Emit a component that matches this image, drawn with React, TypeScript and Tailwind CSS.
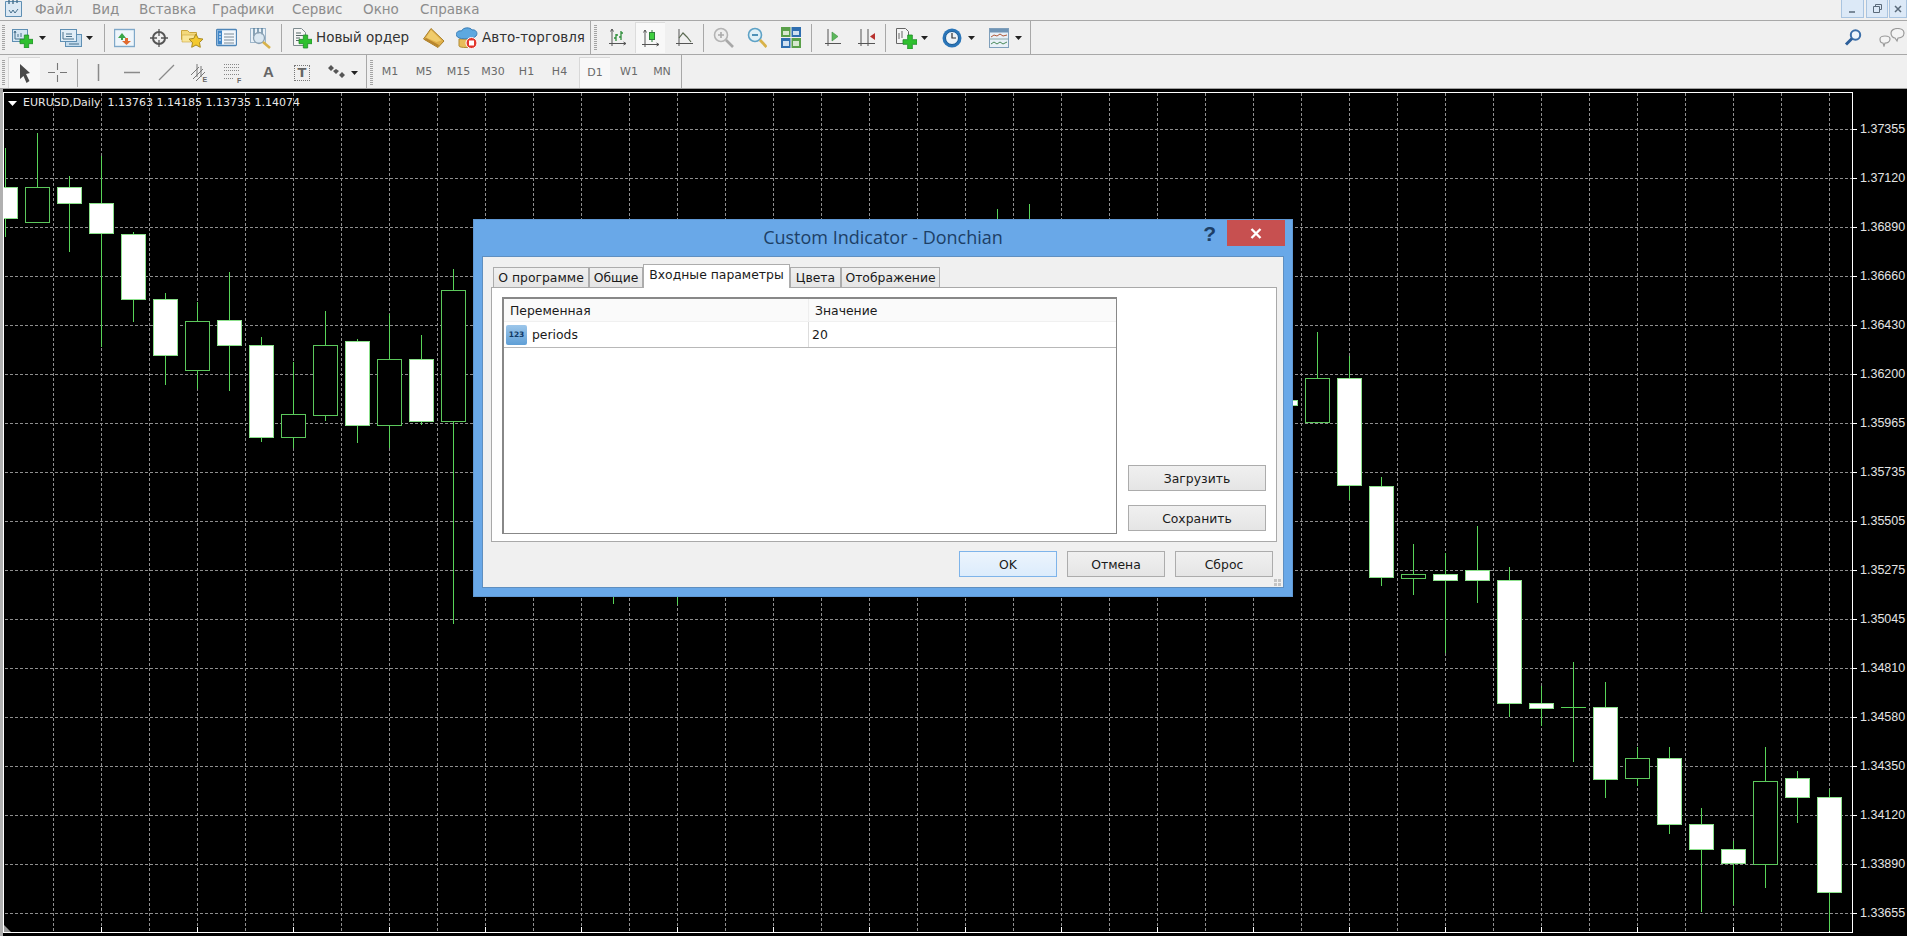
import React from "react";

const S = ({ w, h, className = "", children }: { w: number; h: number; className?: string; children: React.ReactNode }) => (
  <svg width={w} height={h} viewBox={`0 0 ${w} ${h}`} className={`shrink-0 ${className}`}>{children}</svg>
);

const Plus = ({ x, y, s = 11 }: { x: number; y: number; s?: number }) => {
  const t = s / 3;
  return (
    <path
      d={`M${x + t} ${y}h${t}v${t}h${t}v${t}h${-t}v${t}h${-t}v${-t}h${-t}v${-t}h${t}z`}
      fill="#2fc02f"
      stroke="#1f8a2a"
      strokeWidth="0.8"
    />
  );
};

const Drop = ({ ml }: { ml: string }) => (
  <svg width={7} height={4} viewBox="0 0 7 4" className={`shrink-0 ${ml}`}><path d="M0 0h7L3.5 4z" fill="#222" /></svg>
);
const Sep = ({ ml }: { ml: string }) => <div className={`w-px h-[28px] bg-[#a8a8a8] shrink-0 ${ml}`} />;
const Grip = ({ ml }: { ml: string }) => (
  <div className={`w-[3px] h-[26px] shrink-0 bg-[repeating-linear-gradient(to_bottom,#a4a4a4_0,#a4a4a4_1px,transparent_1px,transparent_2px)] ${ml}`} />
);

const NewChart = () => (
  <S w={21} h={20} className="ml-[7px]">
    <rect x="0.5" y="1.5" width="15" height="12" fill="#d5e6f3" stroke="#5f8fb3" />
    <path d="M3 3v8h9M3 3l-1 2M3 3l1 2" stroke="#47708c" fill="none" />
    <path d="M6 9V6M9 9V5" stroke="#47708c" />
    <Plus x={8} y={7} s={13} />
  </S>
);
const Profiles = () => (
  <S w={23} h={20} className="ml-[14px]">
    <rect x="5.5" y="6.5" width="16" height="12" fill="#c4dcee" stroke="#5f8fb3" />
    <rect x="0.5" y="1.5" width="16" height="12" fill="#e0edf7" stroke="#5f8fb3" />
    <path d="M3 4v7h11M6 6h6M6 8.5h6" stroke="#47708c" fill="none" />
    <path d="M9 16h10" stroke="#47708c" />
  </S>
);
const Market = () => (
  <S w={21} h={20} className="ml-[9px]">
    <rect x="0.5" y="1.5" width="20" height="17" fill="#eef5fb" stroke="#7fa8c9" strokeWidth="1.4" />
    <path d="M7 10l-3-0 4-5 4 5h-3v2H7z" fill="#3aa64a" />
    <path d="M11 10h3v3h3l-4.500 4-4.500-4h3z" fill="#e06a30" />
  </S>
);
const Crosshair = () => (
  <S w={18} h={18} className="ml-[15px]">
    <circle cx="9" cy="9" r="6" fill="none" stroke="#555" strokeWidth="2" />
    <path d="M9 0v7M9 11v7M0 9h7M11 9h7" stroke="#555" strokeWidth="1.3" />
  </S>
);
const FolderStar = () => (
  <S w={23} h={21} className="ml-[13px]">
    <path d="M0.500 3.500h6l2 2h7v7H0.500z" fill="#f3d87a" stroke="#c9a53e" />
    <path d="M1 8h13l-1 7H1z" fill="#f9e69a" stroke="#c9a53e" strokeWidth=".6" />
    <path d="M15 7l2.200 4.400 4.800.7-3.500 3.400.8 4.800-4.300-2.300-4.300 2.300.8-4.800-3.500-3.400 4.800-.7z" fill="#f4c92e" stroke="#a98a1e" />
  </S>
);
const TerminalIcon = () => (
  <S w={21} h={19} className="ml-[12px]">
    <rect x="0.500" y="1.500" width="20" height="16" rx="1" fill="#f2f7fc" stroke="#4f86b8" strokeWidth="1.300" />
    <rect x="1.500" y="2.500" width="4.500" height="14" fill="#3f86c8" />
    <path d="M8 6h10M8 9h10M8 12h10M8 15h10" stroke="#7a8a96" />
    <path d="M3 6h2M3 9h2M3 12h2" stroke="#fff" />
  </S>
);
const Tester = () => (
  <S w={22} h={22} className="ml-[13px]">
    <rect x="0.500" y="1.500" width="15" height="14" fill="#eaf2f9" stroke="#9db6cb" />
    <path d="M4 1v8M8 1v6M12 1v7" stroke="#47708c" strokeWidth="1.200" />
    <circle cx="9" cy="11" r="5.500" fill="#d4e4f0" fillOpacity=".7" stroke="#8aa0b2" strokeWidth="1.300" />
    <path d="M13 15l7 6" stroke="#d8b24a" strokeWidth="2.600" />
  </S>
);
const NewOrder = () => (
  <S w={20} h={22} className="ml-[10px]">
    <path d="M1.500 1.500h8l4 4v13h-12z" fill="#f6f6f6" stroke="#7f8b8f" />
    <path d="M4 6h5M4 8.500h7M4 11h4M4 13.500h3" stroke="#566" />
    <Plus x={7} y={8} s={13} />
  </S>
);
const Gold = () => (
  <S w={22} h={20} className="ml-[12px]">
    <path d="M8 0.500L21 13l-6 6.500L0.500 11z" fill="#e0b04a" stroke="#a87f2a" />
    <path d="M8 2L18.500 12.500 13.500 14 3 9.500z" fill="#f0cc6c" />
    <path d="M1 11.500L15 19l1-2-13-7z" fill="#b8862e" />
  </S>
);
const Auto = () => (
  <S w={22} h={22} className="ml-[11px]">
    <path d="M3 13v6c0 2 14 2 14 0v-7H3z" fill="#e8bd5a" stroke="#b08b34" />
    <path d="M1.500 10c-3-3 0-7 4-6 1.500-4 9-4 10.500-1 3.500-1 6.500 3 4 6-2 3-15.500 4-18.500 1z" fill="#5da8e0" stroke="#3a7db5" />
    <circle cx="15.500" cy="16" r="5.500" fill="#e2372c" stroke="#fff" strokeWidth="1" />
    <rect x="13" y="13.500" width="5" height="5" fill="#fff" />
  </S>
);
const Axes = () => (
  <path d="M4 1v17M1 15.500h17M4 1l-1.500 2.500M4 1l1.500 2.500M18 15.500l-2.500-1.500M18 15.500l-2.500 1.500" stroke="#555" fill="none" strokeWidth="1" />
);
const BarChart = () => (
  <S w={19} h={19} className="ml-[11px]"><Axes />
    <path d="M8 13V6M8 10H6M8 7h2M13 12V3M13 9h-2M13 5h2" stroke="#2f8f3a" strokeWidth="1.300" fill="none" />
  </S>
);
const CandleIcon = () => (
  <S w={19} h={19}><Axes />
    <path d="M11 1v12" stroke="#2f7f3a" />
    <rect x="8.500" y="3.500" width="5" height="7" fill="#3fcf3f" stroke="#2f7f3a" />
  </S>
);
const LineIcon = () => (
  <S w={17} h={19} className="ml-[11px]">
    <path d="M3 1v17M0 15.500h17" stroke="#555" />
    <path d="M3 10l4-5 4 4 4 5" stroke="#5b6a52" fill="none" strokeWidth="1.200" />
  </S>
);
const ZoomIn = () => (
  <S w={21} h={21} className="ml-[9px]">
    <circle cx="8" cy="8" r="6.500" fill="#eee" stroke="#b4b4b4" strokeWidth="1.600" />
    <path d="M5 8h6M8 5v6" stroke="#aaa" strokeWidth="1.600" />
    <path d="M13 13l7 7" stroke="#a8a8a8" strokeWidth="2.600" />
  </S>
);
const ZoomOut = () => (
  <S w={20} h={21} className="ml-[13px]">
    <circle cx="8" cy="8" r="6.500" fill="#e0f0f6" stroke="#5ea2c6" strokeWidth="1.600" />
    <path d="M5 8h6" stroke="#3f86b0" strokeWidth="1.800" />
    <path d="M13 13l6.500 7" stroke="#d8b24a" strokeWidth="2.800" />
  </S>
);
const Tile = () => (
  <S w={20} h={21} className="ml-[14px]">
    <rect x="0" y="0" width="9.500" height="10" fill="#5aa04a" />
    <rect x="10.500" y="0" width="9.500" height="10" fill="#2f6eb0" />
    <rect x="0" y="11" width="9.500" height="10" fill="#2f6eb0" />
    <rect x="10.500" y="11" width="9.500" height="10" fill="#5aa04a" />
    <rect x="2" y="4" width="6" height="4" fill="#d8e8d0" />
    <rect x="12" y="4" width="6" height="4" fill="#d0e0f0" />
    <rect x="2" y="14" width="6" height="5" fill="#d0e0f0" />
    <rect x="12" y="14" width="6" height="5" fill="#d8e8d0" />
  </S>
);
const Scroll = () => (
  <S w={17} h={19} className="ml-[12px]">
    <path d="M4 1v17M1 15.500h16" stroke="#555" />
    <path d="M8 4l6 4.500-6 4.500z" fill="#5cb85c" stroke="#3f8f3f" strokeWidth=".6" />
  </S>
);
const Shift = () => (
  <S w={17} h={19} className="ml-[17px]">
    <path d="M3 1v17M10 1v17M0 15.500h17" stroke="#555" />
    <path d="M17 5l-5 3.500 5 3.500z" fill="#b8322f" />
  </S>
);
const TemplateIcon = () => (
  <S w={21} h={23} className="ml-[10px]">
    <path d="M0.500 2.500h9l3 3v12h-12z" fill="#f4f4f4" stroke="#666" />
    <path d="M3 7v6M6 5v7" stroke="#666" />
    <Plus x={7} y={9} s={14} />
  </S>
);
const Clock = () => (
  <S w={20} h={20} className="ml-[14px]">
    <circle cx="10" cy="10" r="9.500" fill="#2a75b8" />
    <circle cx="10" cy="10" r="6.500" fill="#eef3f7" stroke="#175a96" />
    <path d="M10 5v5h4" stroke="#333" strokeWidth="1.200" fill="none" />
  </S>
);
const Indicators = () => (
  <S w={20} h={20} className="ml-[14px]">
    <rect x="0.500" y="0.500" width="19" height="19" fill="#e8f0f7" stroke="#7f9fbb" />
    <rect x="1" y="1" width="18" height="3.500" fill="#6f94b5" />
    <path d="M2 9l3-2 3 1 3-2 3 2 4-1" stroke="#b05a3a" fill="none" />
    <path d="M1 11h18" stroke="#8aa" />
    <path d="M2 16l3-2 3 2 3-2 3 2 4-2" stroke="#4a8a5a" fill="none" />
  </S>
);
const Search = () => (
  <S w={18} h={17} className="shrink-0">
    <circle cx="11.500" cy="6" r="4.700" fill="#eef5fb" stroke="#3b6ea8" strokeWidth="2" />
    <path d="M8 9.500l-6 6" stroke="#2d5f9a" strokeWidth="3" />
  </S>
);
const Chat = () => (
  <S w={26} h={19} className="ml-[17px] mr-[2px]">
    <path d="M12 5c0-6 13-6 13 0 0 4-4 5-6 5l-1 3-2-3c-2 0-4-2-4-5z" fill="#f4f4f4" stroke="#999" strokeWidth="1.200" />
    <path d="M1 11c0-4 10-4 10 0 0 3-3 4-5 4l-1 3-1-3c-2 0-3-1-3-4z" fill="#f4f4f4" stroke="#999" strokeWidth="1.200" />
  </S>
);

const Arrow = () => (
  <S w={12} h={19}><path d="M1 0l10 9-4 1 3.500 7-3 2-3-7-3.500 3z" fill="#4a4a4a" /></S>
);
const ThinCross = () => (
  <S w={19} h={19} className="ml-[8px]"><path d="M9.500 0v7M9.500 12v7M0 9.500h7M12 9.500h7" stroke="#777" strokeWidth="1.100" /></S>
);
const VLine = () => <S w={3} h={17} className="ml-[19px]"><path d="M1.500 0v17" stroke="#8a8a8a" strokeWidth="1.500" /></S>;
const HLine = () => <S w={16} h={3} className="ml-[24px]"><path d="M0 1.500h16" stroke="#8a8a8a" strokeWidth="1.500" /></S>;
const Trend = () => <S w={17} h={17} className="ml-[18px]"><path d="M1 16L16 1" stroke="#8a8a8a" strokeWidth="1.300" /></S>;
const Channel = () => (
  <S w={19} h={20} className="ml-[15px]">
    <path d="M1 12L9 4M3 16L13 6M6 18L15 9M7 1v13M11 3v11" stroke="#777" strokeWidth="1" />
    <text x="12.500" y="19" fontSize="7" fontWeight="700" fill="#666" fontFamily="'Liberation Sans',sans-serif">E</text>
  </S>
);
const Fibo = () => (
  <S w={19} h={20} className="ml-[15px]">
    <path d="M0 1.500h15M0 4.500h15M0 7.500h15M0 11.500h15M0 15.500h10" stroke="#888" strokeDasharray="1 1" />
    <text x="13" y="20" fontSize="7" fontWeight="700" fill="#666" fontFamily="'Liberation Sans',sans-serif">F</text>
  </S>
);
const TBox = () => (
  <div className="ml-[21px] w-[16px] h-[16px] border border-dotted border-[#777] flex items-center justify-center text-[13px] leading-none font-bold text-[#666] shrink-0">T</div>
);
const Arrows = () => (
  <S w={19} h={15} className="ml-[18px]">
    <path d="M0 3l3-3 3 3-3 3zM5 6l3-2 3 2-3 3zM11 10l3-3 3 3-3 3z" fill="#555" />
  </S>
);

type C = [number, number, number, number, number, 0 | 1];
const candles: C[] = [
  [5, 148, 237, 187, 218, 1],
  [37, 133, 222, 187, 222, 0],
  [69, 176, 252, 187, 203, 1],
  [101, 156, 347, 203, 233, 1],
  [133, 232, 322, 234, 299, 1],
  [165, 293, 385, 299, 355, 1],
  [197, 302, 389, 321, 370, 0],
  [229, 272, 391, 320, 345, 1],
  [261, 337, 442, 345, 437, 1],
  [293, 362, 448, 414, 437, 0],
  [325, 311, 421, 345, 415, 0],
  [357, 339, 443, 341, 425, 1],
  [389, 314, 448, 359, 425, 0],
  [421, 335, 425, 359, 421, 1],
  [453, 269, 624, 290, 421, 0],
  [613, 400, 604, 420, 500, 1],
  [677, 400, 605, 420, 500, 0],
  [997, 209, 400, 250, 350, 0],
  [1029, 204, 400, 250, 350, 1],
  [1285, 380, 420, 400, 405, 1],
  [1317, 332, 422, 378, 422, 0],
  [1349, 356, 500, 378, 485, 1],
  [1381, 477, 586, 486, 577, 1],
  [1413, 544, 595, 574, 578, 0],
  [1445, 553, 653, 574, 580, 1],
  [1477, 526, 603, 570, 580, 1],
  [1509, 567, 717, 580, 703, 1],
  [1541, 686, 726, 703, 708, 1],
  [1573, 662, 762, 707, 707, 0],
  [1605, 682, 798, 707, 779, 1],
  [1637, 747, 786, 758, 778, 0],
  [1669, 747, 834, 758, 824, 1],
  [1701, 808, 912, 824, 849, 1],
  [1733, 841, 905, 849, 863, 1],
  [1765, 747, 888, 781, 864, 0],
  [1797, 771, 823, 778, 797, 1],
  [1829, 789, 931, 797, 892, 1],
];

const vGrid = Array.from({ length: 38 }, (_, i) => 53 + 48 * i);
const hGrid = Array.from({ length: 17 }, (_, i) => 129 + 49 * i);
const bottomTicks = Array.from({ length: 19 }, (_, i) => 101 + 96 * i);
const prices = ["1.37355", "1.37120", "1.36890", "1.36660", "1.36430", "1.36200", "1.35965", "1.35735", "1.35505", "1.35275", "1.35045", "1.34810", "1.34580", "1.34350", "1.34120", "1.33890", "1.33655"];

const Chart = () => (
  <svg width={1848} height={839} viewBox="4 93 1848 839" shapeRendering="crispEdges" className="block">
    {hGrid.map((y) => <line key={y} x1={5} x2={1852} y1={y + 0.5} y2={y + 0.5} stroke="#8e8e8e" strokeDasharray="3 2" />)}
    {vGrid.map((x) => <line key={x} x1={x + 0.5} x2={x + 0.5} y1={93} y2={932} stroke="#8e8e8e" strokeDasharray="3 2" />)}
    {bottomTicks.map((x) => <line key={x} x1={x + 0.5} x2={x + 0.5} y1={927} y2={932} stroke="#fff" />)}
    <path d="M4 925l7 7H4z" fill="#9a9a9a" shapeRendering="auto" />
    {candles.map(([x, hi, lo, top, bot, fill]) => (
      <g key={x}>
        <line x1={x + 0.5} x2={x + 0.5} y1={hi} y2={lo} stroke="#58d458" />
        {top === bot ? (
          <line x1={x - 12} x2={x + 13} y1={top + 0.5} y2={top + 0.5} stroke="#58d458" />
        ) : (
          <rect x={x - 11.5} y={top + 0.5} width={24} height={bot - top} fill={fill ? "#ffffff" : "#000000"} stroke={fill ? "#8be08b" : "#5cc85c"} />
        )}
      </g>
    ))}
  </svg>
);

const Tab = ({ w, label }: { w: string; label: string }) => (
  <div className={`${w} h-[20px] pt-[2px] border border-b-0 border-[#acacac] bg-gradient-to-b from-[#f0f0f0] to-[#e5e5e5] flex items-center justify-center shrink-0 text-[#1a1a1a]`}>{label}</div>
);

const Btn = ({ w, label, primary }: { w: string; label: string; primary?: boolean }) => (
  <div
    className={`${w} h-[26px] pt-[2px] border flex items-center justify-center text-[#1a1a1a] shrink-0 bg-gradient-to-b ${
      primary ? "border-[#7eb4ea] from-[#ecf4fc] to-[#dcecfc]" : "border-[#acacac] from-[#f0f0f0] to-[#e5e5e5]"
    }`}
  >
    {label}
  </div>
);

const Dialog = () => (
  <div className="absolute left-[473px] top-[219px] w-[820px] h-[378px] bg-[#69a8e8] border border-[#5f98d4] flex flex-col font-['DejaVu_Sans',sans-serif] text-[12.4px]">
    <div className="h-[36px] shrink-0 grid grid-cols-[1fr_auto_1fr] items-start">
      <div />
      <div className="h-[34px] flex items-center font-['Open_Sans',sans-serif] text-[18px] text-[#1d3f66]">Custom Indicator - Donchian</div>
      <div className="flex justify-end mr-[7px]">
        <div className="mr-[11px] h-[26px] flex items-center text-[#1d3f66] font-bold text-[21px] font-['Liberation_Sans',sans-serif] leading-none">?</div>
        <div className="w-[58px] h-[26px] bg-[#c75050] flex items-center justify-center">
          <svg width="12" height="11" viewBox="0 0 12 11"><path d="M1.500 1l9 9M10.500 1l-9 9" stroke="#fff" strokeWidth="2.400" /></svg>
        </div>
      </div>
    </div>
    <div className="relative mx-[8px] h-[332px] border border-[#5f8fc0] bg-[#f0f0f0] flex flex-col px-[8px] pt-[7px]">
      <div className="h-[23px] flex items-end pl-[2px] shrink-0 relative">
        <Tab w="w-[96px]" label="О программе" />
        <Tab w="w-[54px]" label="Общие" />
        <div className="relative z-10 -mb-px w-[147px] h-[24px] border border-b-0 border-[#acacac] bg-white flex items-center justify-center shrink-0 pb-[2px] text-[#1a1a1a]">Входные параметры</div>
        <Tab w="w-[51px]" label="Цвета" />
        <Tab w="w-[99px]" label="Отображение" />
      </div>
      <div className="h-[255px] w-[786px] border border-[#a9a9a9] bg-white flex pl-[10px] pt-[9px] shrink-0 text-[#1a1a1a]">
        <div className="w-[615px] h-[237px] border-t-2 border-l-2 border-r border-b border-[#888888] flex flex-col shrink-0">
          <div className="h-[23px] bg-[#fafafa] border-b border-[#f0f0f0] flex items-center shrink-0">
            <div className="w-[305px] h-full border-r border-[#eeeeee] flex items-center pl-[6px] pt-[2px] shrink-0">Переменная</div>
            <div className="pl-[6px] pt-[2px]">Значение</div>
          </div>
          <div className="h-[26px] border-b border-[#b8b8b8] flex items-center shrink-0">
            <div className="w-[305px] h-full border-r border-[#dddddd] flex items-center pl-[2px] shrink-0">
              <div className="relative w-[21px] h-[20px] shrink-0 rounded-[2px] bg-gradient-to-b from-[#9cc6ea] to-[#5f9fd6] flex items-center justify-center text-[7.500px] font-bold text-[#123a66] leading-none">123</div>
              <span className="ml-[5px] pt-[2px]">periods</span>
            </div>
            <div className="pl-[3px] pt-[2px]">20</div>
          </div>
        </div>
        <div className="ml-[11px] pt-[168px] flex flex-col gap-[14px]">
          <Btn w="w-[138px]" label="Загрузить" />
          <Btn w="w-[138px]" label="Сохранить" />
        </div>
      </div>
      <div className="mt-[9px] flex justify-end gap-[10px] pr-[2px]">
        <Btn w="w-[98px]" label="OK" primary />
        <Btn w="w-[98px]" label="Отмена" />
        <Btn w="w-[98px]" label="Сброс" />
      </div>
      <svg width="7" height="7" viewBox="0 0 7 7" className="absolute right-[2px] bottom-[1px]">
        <path d="M0 0h3v3H0zM4 0h3v3H4zM0 4h3v3H0zM4 4h3v3H4z" fill="#c4c4c4" />
      </svg>
    </div>
  </div>
);

const WinBtn = ({ w, ml, children }: { w: string; ml: string; children: React.ReactNode }) => (
  <div className={`${w} ${ml} h-[18px] bg-[#dce9f7] border border-t-0 border-[#a9c4e0] flex items-center justify-center shrink-0`}>{children}</div>
);

export default function App() {
  return (
    <div className="relative w-[1907px] h-[936px] overflow-hidden bg-black flex flex-col font-['DejaVu_Sans',sans-serif]">
      <div className="h-[21px] shrink-0 bg-[#f0f0f0] border-b border-[#a8a8a8] flex items-start text-[13.500px] text-[#8c8c8c] leading-[19px]">
        <S w={18} h={18} className="ml-[5px] mr-[12px]">
          <path d="M0.500 1.500h16v15h-16z" fill="#dce9f4" stroke="#5f8fb3" />
          <path d="M4 0v4M8 0v4M12 0v3" stroke="#47708c" strokeWidth="1.400" />
          <path d="M4 10l2 3 2-3 2 3 3-4" stroke="#47708c" fill="none" />
        </S>
        <div className="w-[57px]">Файл</div>
        <div className="w-[47px]">Вид</div>
        <div className="w-[73px]">Вставка</div>
        <div className="w-[80px]">Графики</div>
        <div className="w-[71px]">Сервис</div>
        <div className="w-[57px]">Окно</div>
        <div>Справка</div>
        <div className="ml-auto flex">
          <WinBtn w="w-[23px]" ml="ml-0"><svg width="7" height="8" viewBox="0 0 7 8"><path d="M0 7h6" stroke="#5a6a7a" strokeWidth="1.500" /></svg></WinBtn>
          <WinBtn w="w-[22px]" ml="ml-[2px]"><svg width="9" height="9" viewBox="0 0 9 9"><path d="M2.500 2.500v-2h6v5h-2M0.500 2.500h6v6h-6z" stroke="#5a6a7a" fill="none" /></svg></WinBtn>
          <WinBtn w="w-[18px]" ml="ml-[1px]"><svg width="8" height="8" viewBox="0 0 8 8"><path d="M1 1l6 6M7 1l-6 6" stroke="#5a6a7a" strokeWidth="1.500" /></svg></WinBtn>
        </div>
      </div>

      <div className="h-[34px] shrink-0 bg-[#f0f0f0] border-b border-[#a8a8a8] flex text-[13.500px] text-[#333333]">
        <div className="w-[591px] shrink-0 border-r border-[#a8a8a8] flex items-center">
          <Grip ml="ml-[2px]" />
          <NewChart />
          <Drop ml="ml-[6px]" />
          <Profiles />
          <Drop ml="ml-[3px]" />
          <Sep ml="ml-[11px]" />
          <Market />
          <Crosshair />
          <FolderStar />
          <TerminalIcon />
          <Tester />
          <Sep ml="ml-[9px]" />
          <NewOrder />
          <span className="ml-[4px] w-[95px] shrink-0 whitespace-nowrap">Новый ордер</span>
          <Gold />
          <Auto />
          <span className="ml-[4px] w-[104px] shrink-0 whitespace-nowrap">Авто-торговля</span>
        </div>
        <div className="w-[440px] shrink-0 border-r border-[#a8a8a8] flex items-center">
          <Grip ml="ml-[3px]" />
          <BarChart />
          <div className="ml-[8px] w-[30px] h-[31px] bg-[#f8f8f8] border-t border-l border-[#dcdcdc] flex items-center justify-center shrink-0"><CandleIcon /></div>
          <LineIcon />
          <Sep ml="ml-[10px]" />
          <ZoomIn />
          <ZoomOut />
          <Tile />
          <Sep ml="ml-[10px]" />
          <Scroll />
          <Shift />
          <Sep ml="ml-[10px]" />
          <TemplateIcon />
          <Drop ml="ml-[4px]" />
          <Clock />
          <Drop ml="ml-[6px]" />
          <Indicators />
          <Drop ml="ml-[6px]" />
        </div>
        <div className="ml-auto flex items-center">
          <Search />
          <Chat />
        </div>
      </div>

      <div className="h-[34px] shrink-0 bg-[#f0f0f0] border-b border-[#a0a0a0] flex text-[11px] text-[#6a6a6a]">
        <div className="w-[367px] shrink-0 border-r border-[#a8a8a8] flex items-center pt-[2px]">
          <Grip ml="ml-[2px]" />
          <div className="ml-[3px] w-[32px] h-[31px] bg-[#f8f8f8] border-t border-l border-[#d8d8d8] flex items-center justify-center shrink-0"><Arrow /></div>
          <ThinCross />
          <Sep ml="ml-[10px]" />
          <VLine />
          <HLine />
          <Trend />
          <Channel />
          <Fibo />
          <span className="ml-[20px] w-[10px] shrink-0 text-[15px] font-bold text-[#666] font-['Liberation_Sans',sans-serif]">A</span>
          <TBox />
          <Arrows />
          <Drop ml="ml-[4px]" />
        </div>
        <div className="w-[315px] shrink-0 border-r border-[#a8a8a8] flex items-center pt-[2px]">
          <Grip ml="ml-[3px]" />
          <div className="w-[34px] text-center shrink-0">M1</div>
          <div className="w-[34px] text-center shrink-0">M5</div>
          <div className="w-[35px] text-center shrink-0">M15</div>
          <div className="w-[34px] text-center shrink-0">M30</div>
          <div className="w-[33px] text-center shrink-0">H1</div>
          <div className="w-[33px] text-center shrink-0">H4</div>
          <div className="ml-[3px] w-[31px] h-[31px] bg-[#f8f8f8] border-t border-l border-[#d8d8d8] flex items-center justify-center shrink-0">D1</div>
          <div className="w-[38px] text-center shrink-0">W1</div>
          <div className="w-[28px] text-center shrink-0">MN</div>
        </div>
      </div>

      <div className="flex-1 flex min-h-0">
        <div className="w-[3px] h-full bg-[#b0b0b0] shrink-0" />
        <div className="shrink-0 flex flex-col pt-[3px]">
          <div className="relative w-[1850px] h-[841px] border border-white">
            <Chart />
            <div className="absolute left-[4px] top-[2px] flex items-center text-[#e8e8e8] text-[11px] leading-[16px] whitespace-nowrap font-['DejaVu_Sans',sans-serif]">
              <svg width="9" height="5" viewBox="0 0 9 5" className="mr-[6px]"><path d="M0 0h9L4.500 5z" fill="#fff" /></svg>
              <span>EURUSD,Daily</span>
              <span className="ml-[7px]">1.13763 1.14185 1.13735 1.14074</span>
            </div>
          </div>
        </div>
        <div className="flex-1 pt-[16px] flex flex-col font-['Liberation_Sans',sans-serif] text-[12.500px] text-[#e4e4e4]">
          {prices.map((p) => (
            <div key={p} className="h-[49px] shrink-0 flex items-center">
              <div className="w-[4px] h-px bg-white shrink-0" />
              <span className="ml-[3px]">{p}</span>
            </div>
          ))}
        </div>
      </div>

      <Dialog />
    </div>
  );
}
